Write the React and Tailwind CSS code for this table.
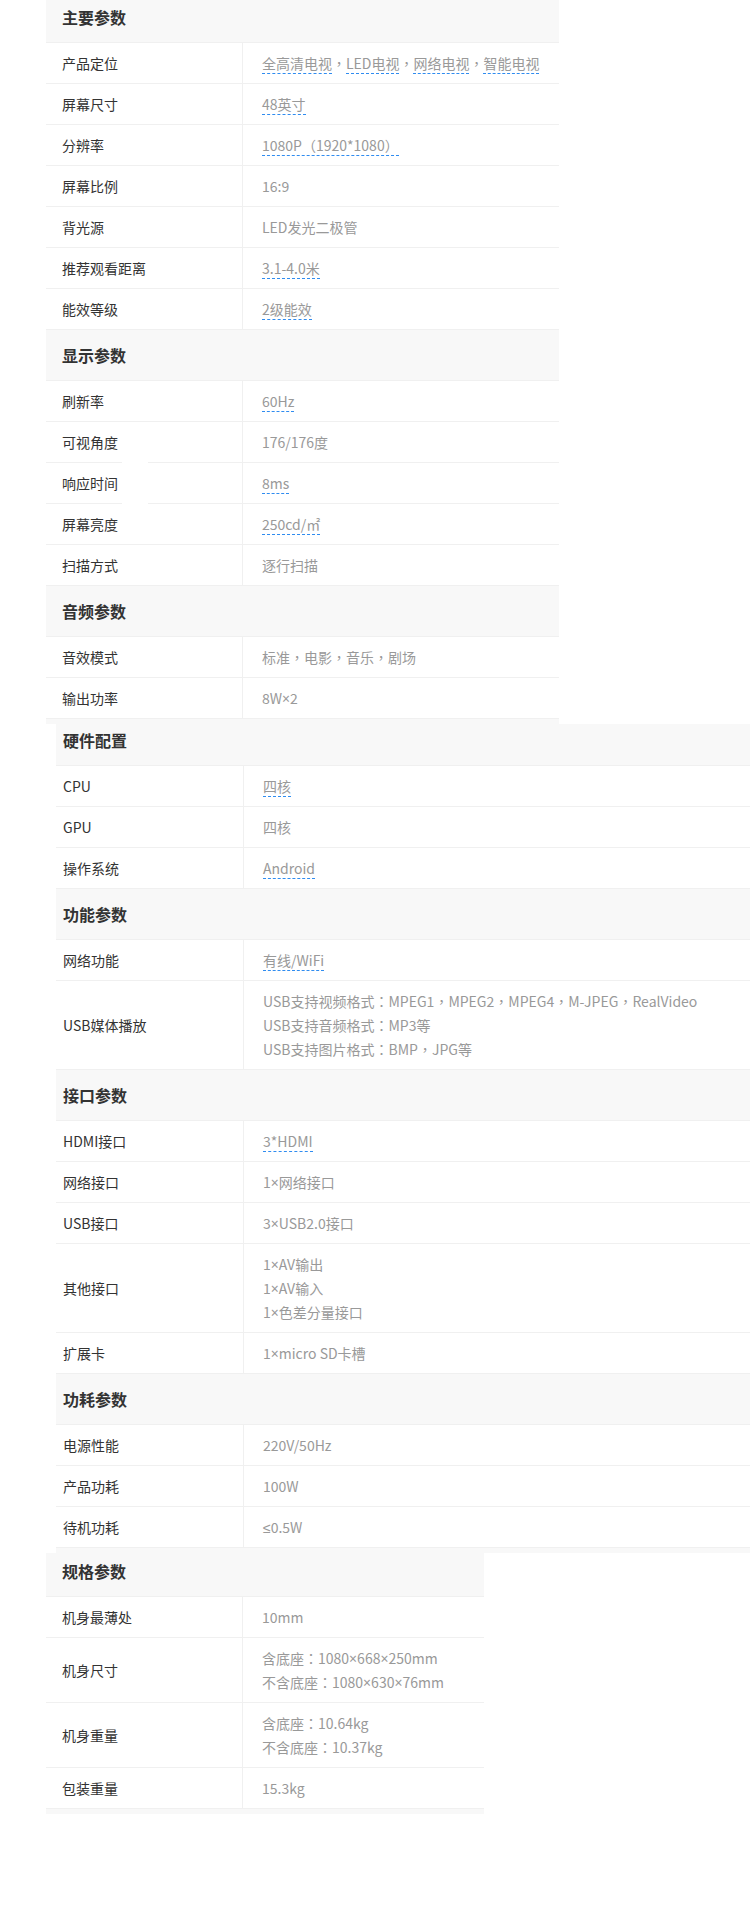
import React from "react";

function fmt(s) {
  if (typeof s !== "string") return s;
  return s.split(/([，：（）×≤])/).map((part, i) => {
    if (part === "") return null;
    if ("，：（）".includes(part) && part.length === 1)
      return (
        <span key={i} className="leading-none font-['Noto_Sans_CJK_TC',sans-serif]">
          {part}
        </span>
      );
    if ("×≤".includes(part) && part.length === 1)
      return (
        <span key={i} className="leading-none font-['Noto_Sans',sans-serif]">
          {part}
        </span>
      );
    return <React.Fragment key={i}>{part}</React.Fragment>;
  });
}

function U({ children }) {
  return <span className="border-b border-dashed border-[#2f8cf0]">{fmt(children)}</span>;
}

function Sep() {
  return <span className="leading-none font-['Noto_Sans_CJK_TC',sans-serif]">，</span>;
}

function Header({ children }) {
  return (
    <div className="h-[51px] flex items-center bg-[#f8f8f8] border-b border-[#f0f0f0] pl-4 text-base font-bold text-[#333]">
      {children}
    </div>
  );
}

function HeaderB({ children }) {
  return (
    <div className="h-[51px] flex items-center bg-[#f8f8f8] border-b border-[#f0f0f0] pl-[7px] text-base font-bold text-[#333]">
      {children}
    </div>
  );
}

function Row({ label, lines, narrow, gap }) {
  return (
    <div className="relative flex bg-white border-b border-[#f0f0f0]">
      <div
        className={
          narrow
            ? "w-[188px] pl-[7px] shrink-0 flex items-center border-r border-[#f0f0f0] text-[#333]"
            : "w-[197px] pl-4 shrink-0 flex items-center border-r border-[#f0f0f0] text-[#333]"
        }
      >
        {label}
      </div>
      <div className="flex-1 py-2 pl-[19px] text-[#999] leading-6">
        {lines.map((l, i) => (
          <div key={i} className="h-6 whitespace-nowrap">
            {fmt(l)}
          </div>
        ))}
      </div>
      {gap && <span className="absolute left-[76px] bottom-[-1px] h-px w-[26px] bg-white" />}
    </div>
  );
}

export default function App() {
  return (
    <div className="min-h-[1908px] w-[750px] bg-white text-sm font-['Noto_Sans_CJK_SC',sans-serif] overflow-hidden">
      {/* Table A */}
      <div className="ml-[46px] w-[513px] overflow-hidden bg-[#f8f8f8] pb-[5px]">
        <div className="-mt-[8px]">
          <Header>主要参数</Header>
          <Row
            label="产品定位"
            lines={[
              <>
                <U>全高清电视</U>
                <Sep />
                <U>LED电视</U>
                <Sep />
                <U>网络电视</U>
                <Sep />
                <U>智能电视</U>
              </>,
            ]}
          />
          <Row label="屏幕尺寸" lines={[<U>48英寸</U>]} />
          <Row label="分辨率" lines={[<U>1080P（1920*1080）</U>]} />
          <Row label="屏幕比例" lines={["16:9"]} />
          <Row label="背光源" lines={["LED发光二极管"]} />
          <Row label="推荐观看距离" lines={[<U>3.1-4.0米</U>]} />
          <Row label="能效等级" lines={[<U>2级能效</U>]} />
          <Header>显示参数</Header>
          <Row label="刷新率" lines={[<U>60Hz</U>]} />
          <Row label="可视角度" lines={["176/176度"]} gap />
          <Row label="响应时间" lines={[<U>8ms</U>]} gap />
          <Row label="屏幕亮度" lines={[<U>250cd/㎡</U>]} />
          <Row label="扫描方式" lines={["逐行扫描"]} />
          <Header>音频参数</Header>
          <Row label="音效模式" lines={["标准，电影，音乐，剧场"]} />
          <Row label="输出功率" lines={["8W×2"]} />
        </div>
      </div>

      {/* Table B */}
      <div className="ml-[56px] overflow-hidden bg-[#f8f8f8] pb-[5px]">
        <div className="-mt-[9px]">
          <HeaderB>硬件配置</HeaderB>
          <Row narrow label="CPU" lines={[<U>四核</U>]} />
          <Row narrow label="GPU" lines={["四核"]} />
          <Row narrow label="操作系统" lines={[<U>Android</U>]} />
          <HeaderB>功能参数</HeaderB>
          <Row narrow label="网络功能" lines={[<U>有线/WiFi</U>]} />
          <Row
            narrow
            label="USB媒体播放"
            lines={[
              "USB支持视频格式：MPEG1，MPEG2，MPEG4，M-JPEG，RealVideo",
              "USB支持音频格式：MP3等",
              "USB支持图片格式：BMP，JPG等",
            ]}
          />
          <HeaderB>接口参数</HeaderB>
          <Row narrow label="HDMI接口" lines={[<U>3*HDMI</U>]} />
          <Row narrow label="网络接口" lines={["1×网络接口"]} />
          <Row narrow label="USB接口" lines={["3×USB2.0接口"]} />
          <Row narrow label="其他接口" lines={["1×AV输出", "1×AV输入", "1×色差分量接口"]} />
          <Row narrow label="扩展卡" lines={["1×micro SD卡槽"]} />
          <HeaderB>功耗参数</HeaderB>
          <Row narrow label="电源性能" lines={["220V/50Hz"]} />
          <Row narrow label="产品功耗" lines={["100W"]} />
          <Row narrow label="待机功耗" lines={["≤0.5W"]} />
        </div>
      </div>

      {/* Table C */}
      <div className="ml-[46px] w-[438px] overflow-hidden bg-[#f8f8f8] pb-[5px]">
        <div className="-mt-[7px]">
          <Header>规格参数</Header>
          <Row label="机身最薄处" lines={["10mm"]} />
          <Row label="机身尺寸" lines={["含底座：1080×668×250mm", "不含底座：1080×630×76mm"]} />
          <Row label="机身重量" lines={["含底座：10.64kg", "不含底座：10.37kg"]} />
          <Row label="包装重量" lines={["15.3kg"]} />
        </div>
      </div>
    </div>
  );
}
